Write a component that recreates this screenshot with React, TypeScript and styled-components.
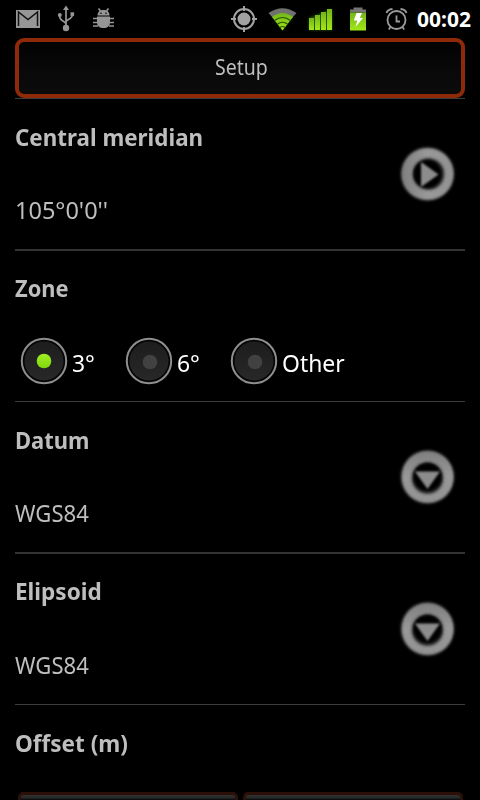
import React from 'react';
import styled, { createGlobalStyle } from 'styled-components';

const GlobalStyle = createGlobalStyle`
  * { box-sizing: border-box; }
  html, body { margin: 0; background: #000; overflow: hidden; }
  body { font-family: 'Noto Sans', 'Open Sans', sans-serif; color: #bebebe; }
`;

const Screen = styled.main`
  width: 480px;
  height: 800px;
  overflow: hidden;
  background: #000;
`;

const StatusBar = styled.header`
  height: 38px;
  display: flex;
  align-items: flex-start;
  justify-content: space-between;
  padding-right: 9px;
`;

const StatusIcons = styled.svg`
  display: block;
  flex: none;
  width: 410px;
  height: 38px;
`;

const Clock = styled.time`
  color: #fff;
  font-size: 21px;
  font-weight: 700;
  line-height: 39px;
  white-space: nowrap;
`;

const Content = styled.div`
  padding: 0 15px;
`;

const SetupButton = styled.button`
  display: block;
  width: 100%;
  height: 60px;
  padding: 0 0 1px 3px;
  border: 4px solid #8f2a08;
  border-radius: 9px;
  background: linear-gradient(#020202, #090909 55%, #0b0b0b);
  color: #bebebe;
  font: 21px/49px 'Noto Sans', sans-serif;
  text-align: center;
`;

const Condensed = styled.span`
  display: inline-block;
  transform: scaleX(0.93);
`;

const Divider = styled.hr<{ $thick?: boolean }>`
  height: ${p => (p.$thick ? 2 : 1)}px;
  margin: 0;
  border: 0;
  background: ${p => (p.$thick ? '#333' : '#3c3c3c')};
`;

const Section = styled.section`
  height: 150px;
  display: flex;
  justify-content: space-between;
`;

const Texts = styled.div<{ $raised?: boolean }>`
  display: flex;
  flex-direction: column;
  padding-top: ${p => (p.$raised ? 21 : 22)}px;
`;

const Title = styled.h2<{ $scale?: number }>`
  margin: 0;
  font-size: 23px;
  font-weight: 700;
  line-height: 32px;
  white-space: nowrap;
  transform: scaleX(${p => p.$scale ?? 1});
  transform-origin: left;
`;

const Value = styled.div<{ $scale?: number; $gap?: number }>`
  margin-top: ${p => p.$gap ?? 41}px;
  font-size: 23px;
  line-height: 32px;
  white-space: nowrap;
  transform: scaleX(${p => p.$scale ?? 1});
  transform-origin: left;
`;

const RoundButton = styled.button`
  align-self: flex-start;
  width: 60px;
  height: 60px;
  margin: 45px 8px 0 0;
  padding: 0;
  border: 0;
  background: none;
`;

const Options = styled.div`
  display: flex;
  margin: 33px 0 0 5px;
`;

const Option = styled.label`
  display: flex;
  width: 105px;
  color: #fff;
  font-size: 24px;
  line-height: 52px;
  white-space: nowrap;
`;

const OptionText = styled.span`
  transform: scaleX(0.955);
  transform-origin: left;
`;

const RadioMark = styled.svg`
  flex: none;
  width: 48px;
  height: 48px;
  margin-right: 4px;
`;

const OffsetArea = styled.section`
  height: 95px;
  padding-top: 22px;
`;

const Fields = styled.div`
  display: flex;
  gap: 5px;
  padding: 33px 2px 0 3px;
`;

const Field = styled.div`
  flex: 1;
  height: 40px;
  border: 3px solid #2b1009;
  border-radius: 5px;
  background: linear-gradient(#33302c 0, #23282a 3px, #050505 5px);
`;

function Arrow({ direction, id }: { direction: 'right' | 'down'; id: string }) {
  const right = direction === 'right';
  return (
    <RoundButton aria-label="Choose">
      <svg width="60" height="60" viewBox="0 0 60 60">
        <defs>
          <linearGradient id={id} x1="0" y1="0" x2={right ? 1 : 0} y2={right ? 0 : 1}>
            <stop offset="0" stopColor="#808080" />
            <stop offset=".5" stopColor="#999" />
            <stop offset="1" stopColor="#929292" />
          </linearGradient>
          <filter id={`${id}-soft`}><feGaussianBlur stdDeviation="0.8" /></filter>
          <filter id={`${id}-glow`}><feGaussianBlur stdDeviation="1.6" /></filter>
        </defs>
        <circle cx="30.5" cy="30" r="26.5" fill="#666" filter={`url(#${id}-glow)`} />
        <circle cx="30.7" cy="30" r="25.3" fill={`url(#${id})`} filter={`url(#${id}-soft)`} />
        <circle cx={right ? 31.5 : 30.5} cy={right ? 30 : 31} r="15.8" fill="#222" filter={`url(#${id}-glow)`} />
        <circle cx="30.5" cy="30" r="13.8" fill="#030303" filter={`url(#${id}-soft)`} />
        <path
          d={right ? 'M24 18L41.5 30.5L24 43Z' : 'M18 24.500H43L30.5 42Z'}
          fill="#8c8c8c"
          filter={`url(#${id}-soft)`}
        />
      </svg>
    </RoundButton>
  );
}

function Radio({ label, on }: { label: string; on?: boolean }) {
  return (
    <Option>
      <RadioMark viewBox="0 0 48 48">
        <defs>
          <linearGradient id="radio-face" x2="0" y2="1">
            <stop stopColor="#1d1d1d" />
            <stop offset="1" stopColor="#282828" />
          </linearGradient>
          <linearGradient id="radio-on" x2="0" y2="1">
            <stop stopColor="#a2ee25" />
            <stop offset="1" stopColor="#7fd60a" />
          </linearGradient>
        </defs>
        <circle cx="24" cy="24" r="22.2" fill="#050505" stroke="#8e8e8e" strokeWidth="2" />
        <circle cx="24" cy="24" r="19.5" fill="url(#radio-face)" />
        <circle cx={on ? 24 : 25} cy={on ? 24 : 25} r="7.3" fill={on ? 'url(#radio-on)' : '#414141'} />
      </RadioMark>
      <OptionText>{label}</OptionText>
    </Option>
  );
}

function Indicators() {
  return (
    <StatusIcons viewBox="0 0 410 38">
      <defs>
        <linearGradient id="green" x2="0" y2="1">
          <stop stopColor="#73b51b" />
          <stop offset="1" stopColor="#a2e817" />
        </linearGradient>
        <filter id="halo" x="-50%" y="-50%" width="200%" height="200%"><feGaussianBlur stdDeviation="1.6" /></filter>
      </defs>
      {/* mail */}
      <rect x="16" y="10" width="24" height="18" fill="#969696" />
      <path d="M18.5 26V12L28 19.5L37.5 12V26" fill="none" stroke="#111" strokeWidth="1.5" />
      {/* usb */}
      <path d="M66 9V27M66 24.5C66 20.5 59.5 22 59.5 15.5M66 22C66 19 72.5 20 72.5 14" fill="none" stroke="#969696" strokeWidth="1.7" />
      <g fill="#969696">
        <path d="M66 5.5L69 10H63Z" />
        <circle cx="66" cy="28" r="3.2" />
        <circle cx="59.8" cy="15" r="2" />
        <rect x="70.5" y="12.3" width="3.6" height="3.6" />
      </g>
      {/* debug robot */}
      <g fill="#969696">
        <path d="M97.5 15.5C97.5 11.8 100 10 103.5 10S109.5 11.8 109.5 15.5Z" />
        <path d="M97 16.5H110V22C110 26 107.5 28 103.5 28S97 26 97 22Z" />
        <path d="M100.5 11L98.5 8.5M106.5 11L108.5 8.5M97 18.5H93M97 22.5H93M98 26H93M110 18.5H114M110 22.5H114M109 26H114" stroke="#969696" strokeWidth="1.7" fill="none" />
      </g>
      <circle cx="101" cy="13.3" r="0.8" fill="#000" />
      <circle cx="106" cy="13.3" r="0.8" fill="#000" />
      {/* location */}
      <circle cx="244" cy="19" r="10" fill="none" stroke="#a2a2a2" strokeWidth="2" />
      <circle cx="244" cy="19" r="6.5" fill="#a2a2a2" />
      <path d="M244 6V11M244 27V32M231 19H236M252 19H257" stroke="#a2a2a2" strokeWidth="2" />
      {/* wireless */}
      <path d="M273 17L282.5 30L292 17Q282.5 9 273 17Z" fill="#599500" opacity=".45" filter="url(#halo)" />
      <path d="M268.5 13Q282.5 3.5 296.5 13L292.5 17.5Q282.5 10 272.5 17.5Z" fill="#707070" />
      <path d="M272 17Q282.5 9 293 17L282.5 30.5Z" fill="url(#green)" />
      <path d="M274.5 20.5Q282.5 14.5 290.5 20.5M277.5 24Q282.5 20.5 287.5 24M280 27.5Q282.5 25.5 285 27.5" fill="none" stroke="#285000" strokeWidth="1.2" />
      {/* signal */}
      <path d="M309 18L332 9V30H309Z" fill="#4b8300" opacity=".65" filter="url(#halo)" />
      <g fill="url(#green)">
        <rect x="309" y="18" width="5" height="12" />
        <rect x="315" y="15" width="5" height="15" />
        <rect x="321" y="12" width="5" height="18" />
        <rect x="327" y="9" width="5" height="21" />
      </g>
      {/* battery */}
      <rect x="353.5" y="7.5" width="9" height="4" fill="#747474" />
      <rect x="350" y="9.5" width="16" height="3" fill="#747474" />
      <rect x="350" y="12.5" width="16" height="18" fill="url(#green)" />
      <path d="M356.5 13H362L359.8 18H363L355.5 27L357.3 20.5H353.8Z" fill="#fff" />
      {/* alarm */}
      <circle cx="396.5" cy="20" r="9" fill="none" stroke="#9a9a9a" strokeWidth="1.8" />
      <path d="M386.5 13Q387.5 9.5 392.5 9M400.5 9Q405.5 9.5 406.5 13M390.5 27L388.8 29.5M402.5 27L404.2 29.5M396.5 15.5V21.5H400" fill="none" stroke="#9a9a9a" strokeWidth="1.8" />
    </StatusIcons>
  );
}

export default function App() {
  return (
    <>
      <GlobalStyle />
      <Screen>
        <StatusBar>
          <Indicators />
          <Clock>00:02</Clock>
        </StatusBar>
        <Content>
          <SetupButton><Condensed>Setup</Condensed></SetupButton>
          <Divider />
          <Section>
            <Texts>
              <Title $scale={0.973}>Central meridian</Title>
              <Value $scale={1.022}>105°0'0''</Value>
            </Texts>
            <Arrow direction="right" id="meridian" />
          </Section>
          <Divider $thick />
          <Section>
            <Texts $raised>
              <Title $scale={0.95}>Zone</Title>
              <Options><Radio label="3°" on /><Radio label="6°" /><Radio label="Other" /></Options>
            </Texts>
          </Section>
          <Divider />
          <Section>
            <Texts>
              <Title $scale={0.955}>Datum</Title>
              <Value $scale={0.96}>WGS84</Value>
            </Texts>
            <Arrow direction="down" id="datum" />
          </Section>
          <Divider $thick />
          <Section>
            <Texts $raised>
              <Title $scale={0.98}>Elipsoid</Title>
              <Value $scale={0.96} $gap={42}>WGS84</Value>
            </Texts>
            <Arrow direction="down" id="elipsoid" />
          </Section>
          <Divider />
          <OffsetArea>
            <Title $scale={0.98}>Offset (m)</Title>
            <Fields><Field /><Field /></Fields>
          </OffsetArea>
        </Content>
      </Screen>
    </>
  );
}
